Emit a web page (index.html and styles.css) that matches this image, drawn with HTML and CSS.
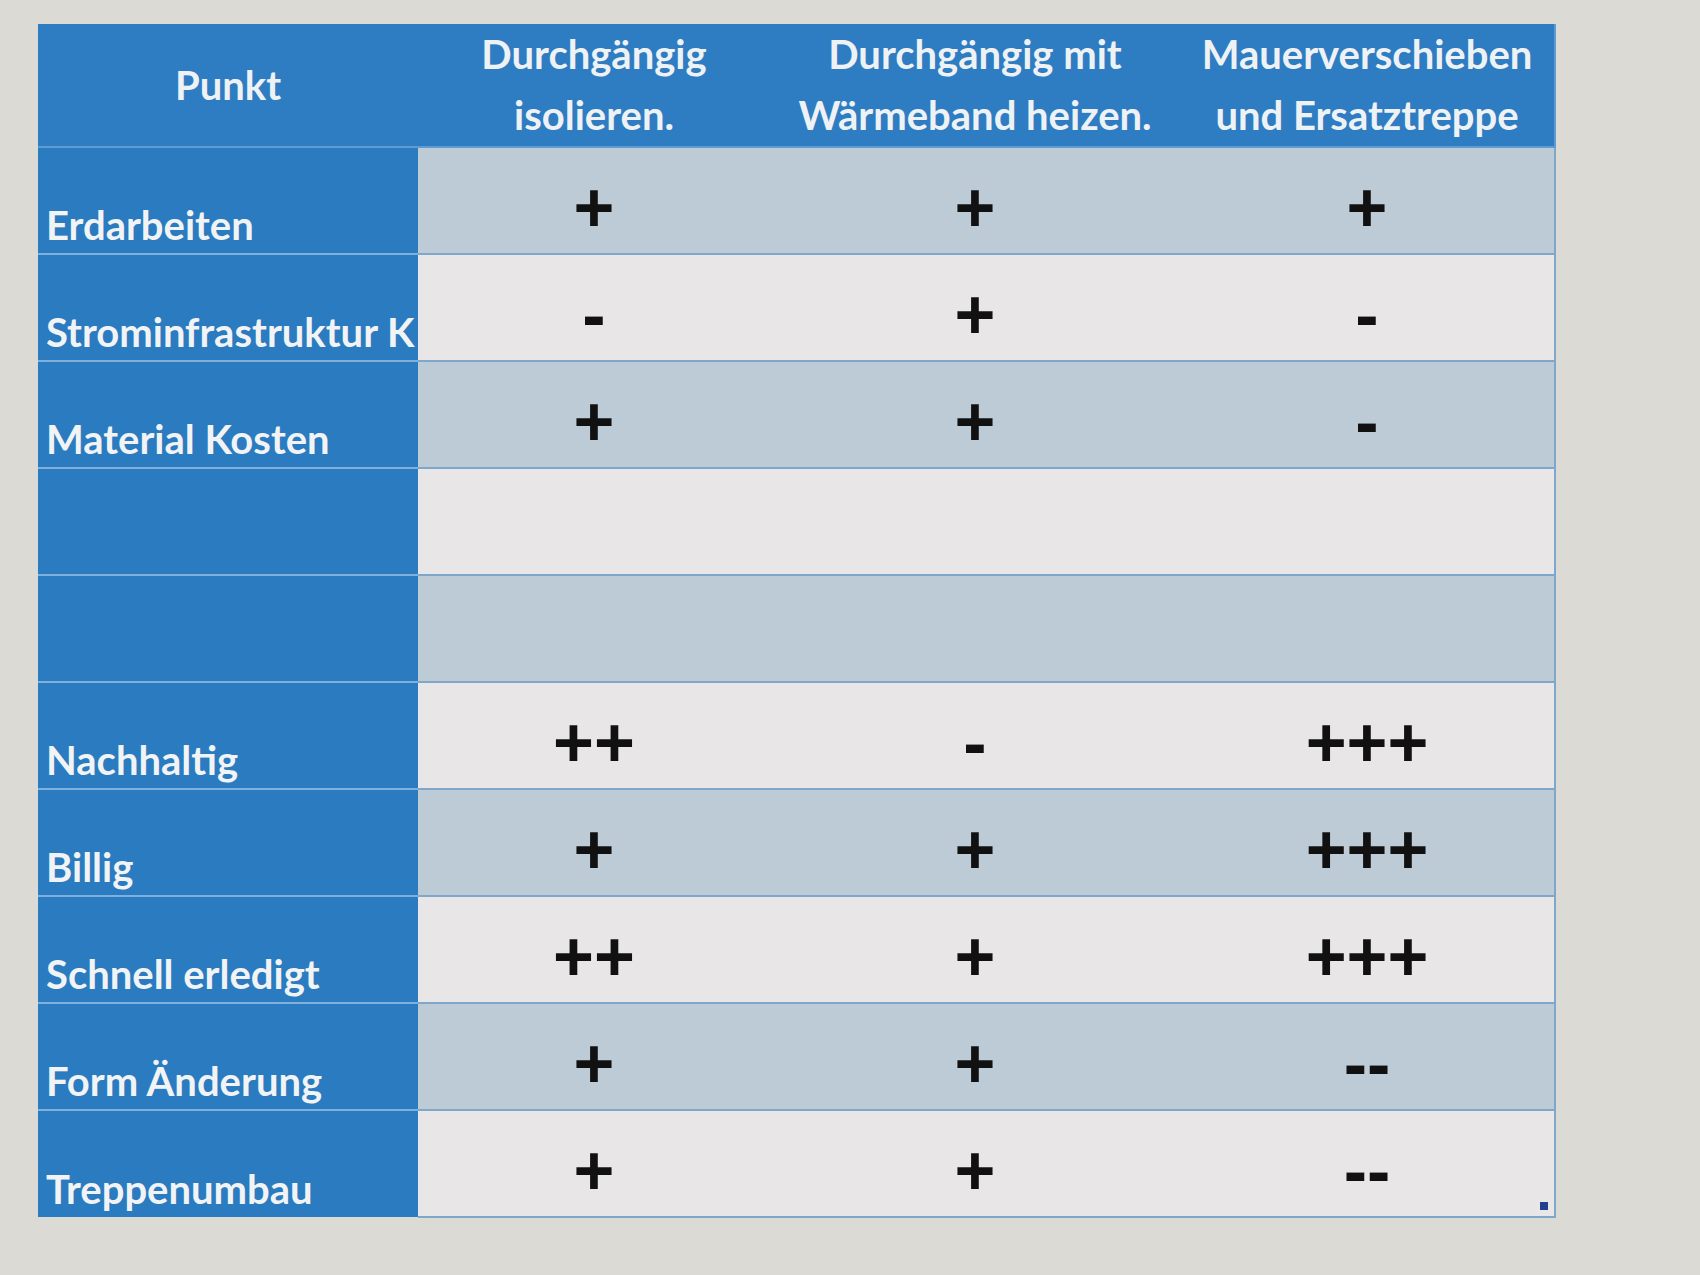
FILE: index.html
```html
<!DOCTYPE html>
<html lang="de">
<head>
<meta charset="utf-8">
<title>Vergleich</title>
<link rel="stylesheet" href="styles.css">
</head>
<body>
<div class="screen">
  <table class="grid">
    <colgroup>
      <col class="c1"><col class="c2"><col class="c3"><col class="c4">
    </colgroup>
    <thead>
      <tr>
        <th>Punkt</th>
        <th>Durchgängig<br>isolieren.</th>
        <th>Durchgängig mit<br>Wärmeband heizen.</th>
        <th>Mauerverschieben<br>und Ersatztreppe</th>
      </tr>
    </thead>
    <tbody>
      <tr class="band"><td class="lbl">Erdarbeiten</td><td class="v">+</td><td class="v">+</td><td class="v">+</td></tr>
      <tr class="plain"><td class="lbl">Strominfrastruktur K</td><td class="v">-</td><td class="v">+</td><td class="v">-</td></tr>
      <tr class="band"><td class="lbl">Material Kosten</td><td class="v">+</td><td class="v">+</td><td class="v">-</td></tr>
      <tr class="plain"><td class="lbl"></td><td class="v"></td><td class="v"></td><td class="v"></td></tr>
      <tr class="band"><td class="lbl"></td><td class="v"></td><td class="v"></td><td class="v"></td></tr>
      <tr class="plain"><td class="lbl">Nachhaltig</td><td class="v">++</td><td class="v">-</td><td class="v">+++</td></tr>
      <tr class="band"><td class="lbl">Billig</td><td class="v">+</td><td class="v">+</td><td class="v">+++</td></tr>
      <tr class="plain"><td class="lbl">Schnell erledigt</td><td class="v">++</td><td class="v">+</td><td class="v">+++</td></tr>
      <tr class="band"><td class="lbl">Form Änderung</td><td class="v">+</td><td class="v">+</td><td class="v">--</td></tr>
      <tr class="plain last"><td class="lbl">Treppenumbau</td><td class="v">+</td><td class="v">+</td><td class="v handle-cell">--<span class="handle"></span></td></tr>
    </tbody>
  </table>
</div>
</body>
</html>
```
FILE: styles.css
```css
html, body {
  margin: 0;
  padding: 0;
  background: #dcdad5;
}
body {
  width: 1700px;
  height: 1275px;
  overflow: hidden;
  font-family: "Lato", "Open Sans", sans-serif;
}
.screen {
  padding: 24px 0 0 38px;
}
.grid {
  border-collapse: collapse;
  table-layout: fixed;
  width: 1517px;
}
.c1 { width: 380px; }
.c2 { width: 352px; }
.c3 { width: 410px; }
.c4 { width: 375px; }

.grid thead tr { height: 123px; }
.grid tbody tr { height: 107px; }

.grid th {
  background: #2e7dc2;
  color: #eef2f4;
  font-weight: 700;
  font-size: 40px;
  line-height: 61px;
  padding: 0;
  text-align: center;
  vertical-align: middle;
  white-space: nowrap;
  border-bottom: 2px solid #5d9bd0;
}
.grid th:last-child {
  border-right: 2px solid #5d9bd0;
}
.grid td {
  padding: 0;
  border-bottom: 2px solid #7ea7c9;
}
.grid td.lbl {
  background: #2a7bc0;
  color: #f1f3f4;
  font-weight: 700;
  font-size: 40px;
  line-height: 48px;
  vertical-align: bottom;
  padding: 0 0 4px 8px;
  white-space: nowrap;
  overflow: hidden;
  border-bottom: 2px solid #7fb0dc;
}
.grid td.v {
  font-family: "Liberation Sans", Arial, sans-serif;
  font-weight: 700;
  font-size: 70px;
  line-height: 1;
  color: #111;
  text-align: center;
  vertical-align: middle;
  padding-top: 14px;
}
.grid td.v:last-child {
  border-right: 2px solid #7ea7c9;
}
.band td.v { background: #bccbd5; }
.plain td.v { background: #e8e6e6; }
.last td { border-bottom: 2px solid #7ea7c9; }
.last td.lbl { border-bottom: none; }
.handle-cell { position: relative; }
.handle {
  position: absolute;
  right: 6px;
  bottom: 6px;
  width: 8px;
  height: 8px;
  background: #23408f;
}
```
